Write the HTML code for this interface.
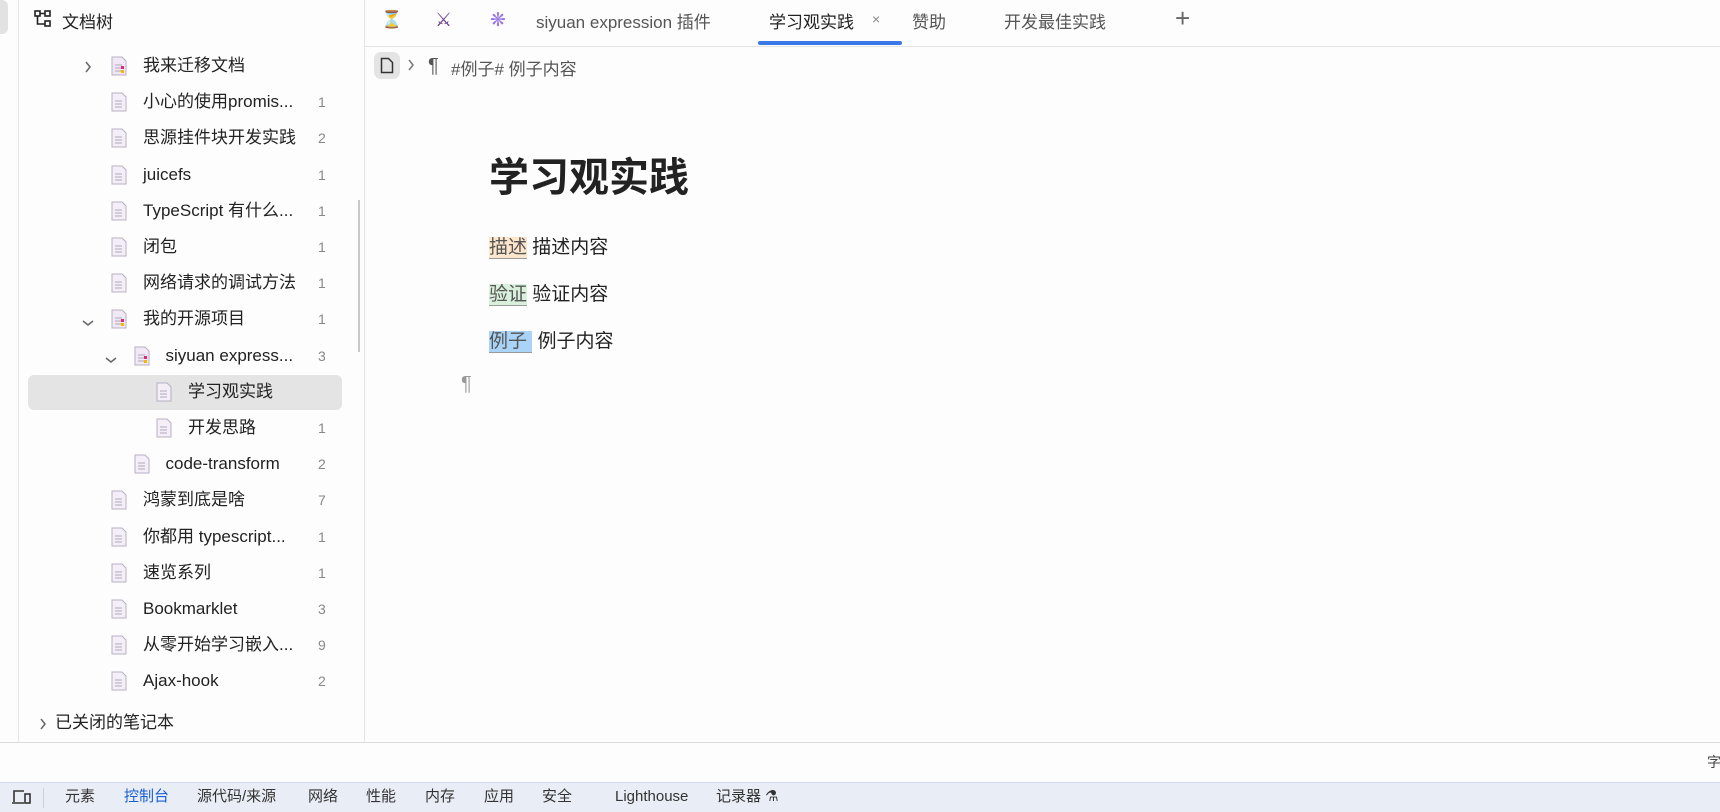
<!DOCTYPE html>
<html><head><meta charset="utf-8"><style>
*{margin:0;padding:0;box-sizing:border-box}
body{width:1720px;height:812px;overflow:hidden;background:#fdfdfd;font-family:"Liberation Sans","Noto Sans CJK SC",sans-serif;color:#222;position:relative}
.a{position:absolute;white-space:nowrap}
.row{position:absolute;height:36px;line-height:36px;font-size:17px;color:#222}
.cnt{position:absolute;left:318px;font-size:14px;color:#888}
.doc{position:absolute;width:16px;height:20px;top:8px}
.tab{position:absolute;top:8px;font-size:17px;color:#555}
.dt{position:absolute;top:782px;height:30px;line-height:30px;font-size:15px;color:#333}
</style></head><body>
<div class="a" style="left:0;top:0;width:8px;height:34px;background:#e2e2e2;border-radius:0 6px 6px 0"></div>
<div class="a" style="left:18px;top:0;width:1px;height:742px;background:#e6e6e6"></div>
<div class="a" style="left:364px;top:0;width:1px;height:742px;background:#e6e6e6"></div>
<svg class="a" style="left:34px;top:10px" width="18" height="18" viewBox="0 0 18 18" fill="none" stroke="#222" stroke-width="1.6"><rect x="1" y="1" width="5" height="5"/><rect x="11" y="1" width="5" height="5"/><rect x="11" y="11" width="5" height="5"/><path d="M6 3.5h5M3.5 6v8h7.5"/></svg>
<div class="a" style="left:62px;top:8px;font-size:17px">文档树</div>
<div class="a" style="left:358px;top:200px;width:2px;height:152px;background:#c8c8c8"></div>
<div class="a" style="left:28px;top:375px;width:314px;height:35px;background:#e4e4e4;border-radius:6px"></div>
<div id="tree"></div>
<div class="a" style="left:365px;top:46px;width:1355px;height:1px;background:#e2e2e2"></div>
<div class="a" style="left:758px;top:41px;width:144px;height:4px;background:#3b78e7;border-radius:2px"></div>
<div class="tab" style="left:381px;top:10px;font-size:17px">⏳</div>
<div class="tab" style="left:435px;top:9px;font-size:19px;color:#6a3d8a">⚔</div>
<div class="tab" style="left:490px;top:9px;font-size:19px;color:#9b7ae0">❋</div>
<div class="tab" style="left:536px;width:185px;overflow:hidden">siyuan expression 插件</div>
<div class="tab" style="left:769px;color:#222">学习观实践</div>
<div class="tab" style="left:872px;font-size:14px;top:11px;color:#888">×</div>
<div class="tab" style="left:912px">赞助</div>
<div class="tab" style="left:1004px">开发最佳实践</div>
<div class="tab" style="left:1175px;top:3px;font-size:26px;font-weight:300;color:#666">+</div>
<div class="a" style="left:374px;top:52px;width:26px;height:27px;background:#e4e4e4;border-radius:7px"></div>
<svg class="a" style="left:380px;top:57px" width="14" height="17" viewBox="0 0 14 17" fill="none" stroke="#333" stroke-width="1.5"><path d="M1.5 1.5h7l4 4v10h-11z"/></svg>
<svg class="a" style="left:407px;top:59px" width="8" height="12" viewBox="0 0 8 12" fill="none" stroke="#777" stroke-width="1.5"><path d="M2 1l4 5-4 5"/></svg>
<div class="a" style="left:428px;top:55px;font-size:20px;color:#555">¶</div>
<div class="a" style="left:451px;top:55px;font-size:17px;color:#555">#例子# 例子内容</div>
<div class="a" style="left:489px;top:145px;font-size:40px;font-weight:bold;color:#222">学习观实践</div>
<div class="a" style="left:489px;top:232px;font-size:19px"><span style="background:#fde6cc;border-bottom:1px solid #999;color:#555">描述</span> 描述内容</div>
<div class="a" style="left:489px;top:279px;font-size:19px"><span style="background:#d9f0dc;border-bottom:1px solid #999;color:#555">验证</span> 验证内容</div>
<div class="a" style="left:489px;top:326px;font-size:19px"><span style="background:#a9d4f7;border-bottom:1px solid #999;color:#555">例子&nbsp;</span> 例子内容</div>
<div class="a" style="left:461px;top:373px;font-size:20px;color:#999">¶</div>
<div class="a" style="left:0;top:742px;width:1720px;height:1px;background:#dcdcdc"></div>
<div class="a" style="left:1707px;top:752px;font-size:14px;color:#444">字</div>
<div class="a" style="left:0;top:782px;width:1720px;height:30px;background:#e9eef6;border-top:1px solid #d3dcec"></div>
<div class="a" style="left:43px;top:788px;width:1px;height:20px;background:#c8d0dc"></div>
<svg class="a" style="left:11px;top:789px" width="20" height="16" viewBox="0 0 20 16" fill="none" stroke="#333" stroke-width="1.6"><path d="M3 13V2h10M1 14h12"/><rect x="14" y="5" width="5" height="9"/></svg>
<div class="dt" style="left:65px">元素</div>
<div class="dt" style="left:124px;color:#1a5fd0">控制台</div>
<div class="dt" style="left:197px">源代码/来源</div>
<div class="dt" style="left:308px">网络</div>
<div class="dt" style="left:366px">性能</div>
<div class="dt" style="left:425px">内存</div>
<div class="dt" style="left:484px">应用</div>
<div class="dt" style="left:542px">安全</div>
<div class="dt" style="left:615px">Lighthouse</div>
<div class="dt" style="left:716px">记录器 ⚗</div>
<script>
var rows=[
[0,1,'我来迁移文档','',1],[0,0,'小心的使用promis...','1'],[0,0,'思源挂件块开发实践','2'],[0,0,'juicefs','1'],
[0,0,'TypeScript 有什么...','1'],[0,0,'闭包','1'],[0,0,'网络请求的调试方法','1'],[0,2,'我的开源项目','1',1],
[1,2,'siyuan express...','3',1],[2,0,'学习观实践',''],[2,0,'开发思路','1'],[1,0,'code-transform','2'],
[0,0,'鸿蒙到底是啥','7'],[0,0,'你都用 typescript...','1'],[0,0,'速览系列','1'],[0,0,'Bookmarklet','3'],
[0,0,'从零开始学习嵌入...','9'],[0,0,'Ajax-hook','2']];
var h='';
var R='<svg width="8" height="12" viewBox="0 0 8 12" fill="none" stroke="#666" stroke-width="1.5"><path d="M2 1l4 5-4 5"/></svg>';
var D='<svg width="12" height="8" viewBox="0 0 12 8" fill="none" stroke="#666" stroke-width="1.5"><path d="M1 2l5 4 5-4"/></svg>';
rows.forEach(function(r,i){
 var y=48+i*36.2,o=r[0]*22.5;
 if(r[1]==1)h+='<div class="a" style="left:'+(84+o)+'px;top:'+(y+12)+'px">'+R+'</div>';
 if(r[1]==2)h+='<div class="a" style="left:'+(82+o)+'px;top:'+(y+13)+'px">'+D+'</div>';
 var col=r[4]?'#f0e8f4':'#f3eef7';
 h+='<svg class="doc" style="left:'+(111+o)+'px;top:'+(y+8)+'px" width="16" height="20" viewBox="0 0 16 20"><path d="M1 1h10l4 4v14H1z" fill="'+col+'" stroke="#b9b0c4"/><path d="M4 9h7M4 12h7M4 15h7" stroke="#b0a8bc"/>'+(r[4]?'<rect x="10" y="10" width="3" height="3" fill="#e0287a"/><rect x="10" y="14" width="3" height="3" fill="#f5b800"/>':'')+'</svg>';
 h+='<div class="row" style="left:'+(143+o)+'px;top:'+y+'px">'+r[2]+'</div>';
 if(r[3])h+='<div class="row cnt" style="top:'+y+'px;font-size:14px;color:#888">'+r[3]+'</div>';
});
h+='<div class="a" style="left:39px;top:717px">'+R+'</div><div class="row" style="left:55px;top:705px">已关闭的笔记本</div>';
document.getElementById('tree').innerHTML=h;
</script>
</body></html>
